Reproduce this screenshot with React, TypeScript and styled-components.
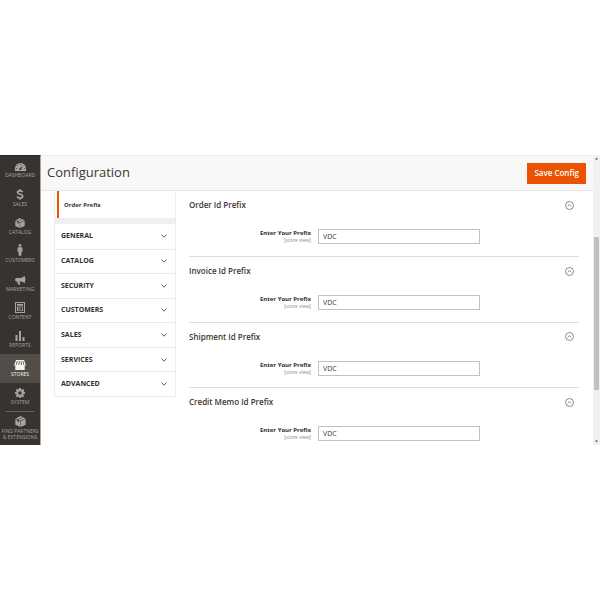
import React, { useState } from "react";
import styled, { createGlobalStyle, css } from "styled-components";

const GlobalStyle = createGlobalStyle`
  *, *::before, *::after { box-sizing: border-box; }
  body {
    margin: 0;
    background: #fff;
    color: #41362f;
    font-family: "Open Sans", "Noto Sans", sans-serif;
  }
  button, input { font-family: inherit; }
`;

const Page = styled.div`
  min-height: 100vh;
  display: flex;
  align-items: center;
`;

const Shell = styled.div`
  flex: 1;
  min-width: 0;
  min-height: 290px;
  display: flex;
  background: #fff;
`;

const Sidebar = styled.nav`
  flex: none;
  width: 41px;
  display: flex;
  flex-direction: column;
  background: #373330;
  border-top: 1px solid #2c2825;
  border-right: 1px solid #aaa6a2;
`;

const NavList = styled.div`
  flex: 1;
  display: grid;
  grid-auto-rows: 1fr;
`;

const NavLink = styled.a<{ $active?: boolean }>`
  display: flex;
  flex-direction: column;
  align-items: center;
  justify-content: flex-end;
  gap: 1px;
  padding-bottom: 5px;
  color: #a9a39e;
  font-size: 5px;
  line-height: 7px;
  text-align: center;
  text-decoration: none;
  text-transform: uppercase;
  white-space: nowrap;
  ${(p) =>
    p.$active &&
    css`
      background: #524d49;
      color: #f7f3eb;
    `}
  svg { display: block; fill: currentColor; }
`;

const NavRule = styled.hr`
  width: 28px;
  height: 1px;
  margin: 0 auto;
  border: 0;
  background: #67625e;
`;

const PartnersLink = styled(NavLink)`
  height: 33px;
  line-height: 6px;
`;

const Main = styled.main`
  flex: 1;
  min-width: 0;
  display: flex;
  flex-direction: column;
`;

const PageHeader = styled.header`
  height: 36px;
  flex: none;
  display: flex;
  align-items: center;
  justify-content: space-between;
  padding: 0 7px 0 6px;
  background: #f8f8f8;
  border-top: 1px solid #ededed;
  border-bottom: 1px solid #e6e6e6;
`;

const Title = styled.h1`
  margin: 0;
  padding-bottom: 2px;
  font-size: 13px;
  line-height: 18px;
  font-weight: 400;
`;

const SaveButton = styled.button`
  height: 21px;
  padding: 0 6px 1px;
  border: 1px solid #eb5202;
  background: #eb5202;
  color: #fff;
  font-size: 8px;
  line-height: 12px;
  font-weight: 600;
`;

const Columns = styled.div`
  flex: 1;
  display: flex;
  align-items: stretch;
  gap: 13px;
  padding: 0 14px 0 13px;
`;

const ConfigMenu = styled.aside`
  flex: none;
  width: 122px;
  align-self: flex-start;
  border: solid #ececec;
  border-width: 0 1px 1px;
`;

const CurrentLink = styled.a`
  display: flex;
  align-items: center;
  height: 27px;
  margin-left: 2px;
  padding-left: 5px;
  border-left: 2px solid #eb5202;
  color: #41362f;
  font-size: 6px;
  font-weight: 700;
  text-decoration: none;
`;

const MenuGap = styled.div`
  height: 6px;
  background: #efefef;
`;

const Categories = styled.div`
  display: grid;
  grid-auto-rows: 1fr;
  min-height: 172px;
`;

const Category = styled.button`
  display: flex;
  align-items: center;
  justify-content: space-between;
  padding: 0 8px 0 6px;
  border: 0;
  background: #fff;
  color: #303030;
  font-size: 7px;
  line-height: 10px;
  font-weight: 700;
  text-transform: uppercase;
  & + & { border-top: 1px solid #ececec; }
`;

const Sections = styled.div`
  flex: 1;
  min-width: 0;
  display: grid;
  grid-template-rows: repeat(3, 1fr) auto;
`;

const Section = styled.section`
  padding-bottom: 4px;
  & + & { border-top: 1px solid #dcdcdc; }
`;

const SectionTitle = styled.h2`
  margin: 0;
`;

const SectionToggle = styled.button`
  width: 100%;
  height: 28px;
  display: flex;
  align-items: center;
  justify-content: space-between;
  padding: 0 5px 0 0;
  border: 0;
  background: none;
  color: #41362f;
  font-size: 8px;
  line-height: 12px;
  font-weight: 600;
`;

const Field = styled.div`
  display: grid;
  grid-template-columns: 122fr 162fr 92fr;
  column-gap: 7px;
  padding-top: 10px;
`;

const FieldLabel = styled.label`
  display: flex;
  flex-direction: column;
  text-align: right;
  font-size: 6px;
  line-height: 9px;
  font-weight: 700;
  color: #303030;
`;

const Scope = styled.span`
  font-size: 5px;
  line-height: 5px;
  font-weight: 400;
  color: #8a8a8a;
`;

const TextInput = styled.input`
  width: 100%;
  min-width: 0;
  height: 15px;
  padding: 0 4px;
  border: 1px solid #c2c2c2;
  border-radius: 0;
  background: #fff;
  color: #41362f;
  font-size: 7px;
`;

const ScrollTrack = styled.div`
  flex: none;
  width: 7px;
  display: flex;
  flex-direction: column;
  align-items: center;
  justify-content: space-between;
  padding: 2px 0;
  background: #f1f1f1;
  svg { display: block; fill: #555; }
`;

const ScrollRail = styled.div`
  flex: 1;
  align-self: stretch;
  display: grid;
  grid-template-rows: 77fr 153fr 50fr;
  padding: 0 1px;
`;

const ScrollThumb = styled.div`
  grid-row: 2;
  background: #c1c1c1;
`;

const Box = ({ size = 10 }: { size?: number }) => (
  <svg width={size} height={size} viewBox="0 0 20 20">
    <path d="M10 0 13.8 1.8 5 6 1.2 4.4ZM15 2.4 19 4.4 10 8.7 6.2 7ZM.6 5.4 4.6 7.2V11L6 10.4 7.2 12V8.4L9.6 9.6V20L.6 15.8ZM19.4 5.4V15.8L10.4 20V9.6Z" />
    <path d="M5 6 13.8 1.8 15 2.4 6.2 7Z" opacity=".55" />
  </svg>
);

const icons: Record<string, React.ReactNode> = {
  dashboard: (
    <svg width="11" height="8" viewBox="0 0 22 16">
      <path
        fillRule="evenodd"
        d="M11 0A11 11 0 0 0 0 11V16H22V11A11 11 0 0 0 11 0ZM10.2 2H11.8V4.4H10.2ZM4.6 4.2 6.2 5.6 5.2 6.6 3.7 5.3ZM2 10H4.2V11.6H2ZM17.8 10H20V11.6H17.8ZM16.8 4.4 12.6 11.2A2.2 2.2 0 1 1 10.4 9.8Z"
      />
    </svg>
  ),
  sales: (
    <svg width="8" height="11" viewBox="0 0 14 20">
      <path
        d="M11.6 6C11.2 4.4 9.6 3.6 7 3.6 4.4 3.6 2.6 4.6 2.6 6.4 2.6 10.8 11.8 8.2 11.8 13.2 11.8 15.2 9.8 16.4 7 16.4 4.2 16.4 2.4 15.4 2 13.4M7 .6V4M7 16V19.4"
        fill="none"
        stroke="currentColor"
        strokeWidth="3.2"
      />
    </svg>
  ),
  catalog: <Box />,
  customers: (
    <svg width="6" height="12" viewBox="0 0 12 24">
      <circle cx="6" cy="3" r="2.8" />
      <path d="M3.2 6.6H8.8Q11 6.6 11 9V15H9.2V17L8.6 23.5H3.4L2.8 17V15H1V9Q1 6.6 3.2 6.6Z" />
    </svg>
  ),
  marketing: (
    <svg width="11" height="9" viewBox="0 0 22 18">
      <path d="M20 0V14L13 10.8H9L10.6 16.4 7 17.8 4.2 10.8H3Q0 10.8 0 7.3 0 4 3 4H12ZM21 5H22V9H21Z" />
    </svg>
  ),
  content: (
    <svg width="10" height="11" viewBox="0 0 20 22">
      <path
        fillRule="evenodd"
        d="M0 0H20V22H0ZM2 2V20H18V2ZM4 4H16V7.4H4ZM4 9H7V18H4ZM9 9H16V18H9ZM10.6 10.6V16.4H14.4V10.6Z"
      />
    </svg>
  ),
  reports: (
    <svg width="10" height="10" viewBox="0 0 20 20">
      <path d="M1 8H5V20H1ZM8 0H12V20H8ZM15 12H19V20H15Z" />
    </svg>
  ),
  stores: (
    <svg width="12" height="10" viewBox="0 0 24 20">
      <path
        fillRule="evenodd"
        d="M4 0H20L23.5 9Q23.4 11.4 21.4 11.6V20H2.6V11.6Q.6 11.4 .5 9ZM6 2 3.4 9.6H5.4L7.4 2ZM9.8 2 8.8 9.6H10.8L11.2 2ZM13.6 2 13.8 9.6H15.8L15 2ZM17.2 2 19 9.6H20.8L18.6 2Z"
      />
    </svg>
  ),
  system: (
    <svg width="10" height="10" viewBox="0 0 20 20">
      <path
        fillRule="evenodd"
        d="M8.2 0H11.8L12.3 2.9 14.1 3.7 16.5 2 19 4.5 17.3 6.9 18 8.2 20 8.5V11.8L17.2 12.3 16.4 14 18 16.5 15.6 18.9 13.1 17.2 11.8 17.7 11.5 20H8.3L7.7 17.5 6.2 16.9 3.8 18.6 1.4 16.2 3 13.8 2.4 12.2 0 11.8V8.3L2.6 7.7 3.2 6.2 1.6 3.9 4 1.5 6.3 3.1 7.7 2.6ZM10 6.5A3.6 3.6 0 1 0 10 13.7 3.6 3.6 0 1 0 10 6.5Z"
      />
    </svg>
  ),
};

const navItems = ["Dashboard", "Sales", "Catalog", "Customers", "Marketing", "Content", "Reports", "Stores", "System"];
const categories = ["General", "Catalog", "Security", "Customers", "Sales", "Services", "Advanced"];
const sections = ["Order Id Prefix", "Invoice Id Prefix", "Shipment Id Prefix", "Credit Memo Id Prefix"];

const ChevronDown = () => (
  <svg width="6" height="4" viewBox="0 0 12 8" fill="none" stroke="#514943" strokeWidth="1.8">
    <path d="M1 1.2 6 6.4 11 1.2" />
  </svg>
);

const CircleToggle = ({ open }: { open: boolean }) => (
  <svg width="9" height="9" viewBox="0 0 18 18" fill="none" stroke="#6f6863" strokeWidth="1.5">
    <circle cx="9" cy="9" r="8" />
    <path d={open ? "M5.2 10.6 9 7.2 12.8 10.6" : "M5.2 7.4 9 10.8 12.8 7.4"} />
  </svg>
);

function PrefixSection({ title }: { title: string }) {
  const [open, setOpen] = useState(true);
  const id = title.toLowerCase().replace(/ /g, "-");
  return (
    <Section>
      <SectionTitle>
        <SectionToggle type="button" aria-expanded={open} onClick={() => setOpen(!open)}>
          {title}
          <CircleToggle open={open} />
        </SectionToggle>
      </SectionTitle>
      {open && (
        <Field>
          <FieldLabel htmlFor={id}>
            Enter Your Prefix
            <Scope>[store view]</Scope>
          </FieldLabel>
          <TextInput id={id} type="text" defaultValue="VDC" />
        </Field>
      )}
    </Section>
  );
}

export default function App() {
  return (
    <Page>
      <GlobalStyle />
      <Shell>
        <Sidebar>
          <NavList>
            {navItems.map((name) => (
              <NavLink key={name} href="#" $active={name === "Stores"}>
                {icons[name.toLowerCase()]}
                {name}
              </NavLink>
            ))}
          </NavList>
          <NavRule />
          <PartnersLink href="#">
            <Box size={11} />
            <span>
              Find Partners
              <br />
              &amp; Extensions
            </span>
          </PartnersLink>
        </Sidebar>
        <Main>
          <PageHeader>
            <Title>Configuration</Title>
            <SaveButton type="button">Save Config</SaveButton>
          </PageHeader>
          <Columns>
            <ConfigMenu>
              <CurrentLink href="#">Order Prefix</CurrentLink>
              <MenuGap />
              <Categories>
                {categories.map((name) => (
                  <Category key={name} type="button">
                    {name}
                    <ChevronDown />
                  </Category>
                ))}
              </Categories>
            </ConfigMenu>
            <Sections>
              {sections.map((title) => (
                <PrefixSection key={title} title={title} />
              ))}
            </Sections>
          </Columns>
        </Main>
        <ScrollTrack aria-hidden="true">
          <svg width="3" height="3" viewBox="0 0 6 6"><path d="M3 1 6 5H0Z" /></svg>
          <ScrollRail>
            <ScrollThumb />
          </ScrollRail>
          <svg width="3" height="3" viewBox="0 0 6 6"><path d="M3 5 0 1H6Z" /></svg>
        </ScrollTrack>
      </Shell>
    </Page>
  );
}
